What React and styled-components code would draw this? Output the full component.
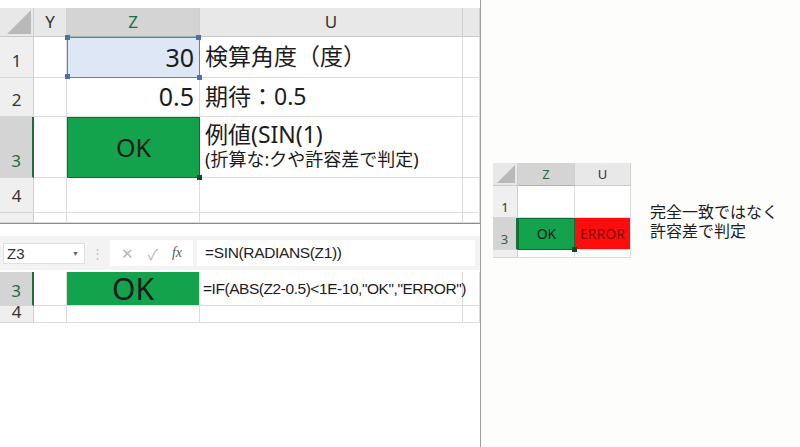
import React from 'react';
import styled, { createGlobalStyle, css } from 'styled-components';

const GlobalStyle = createGlobalStyle`
  html, body {
    margin: 0;
    padding: 0;
    background: #fdfdfb;
  }
  body {
    font-family: "Noto Sans", "Noto Sans CJK JP", sans-serif;
  }
`;

const Page = styled.div`
  display: flex;
  width: 800px;
  height: 447px;
  overflow: hidden;
`;

const LeftPane = styled.div`
  width: 480px;
  flex: none;
  display: flex;
  flex-direction: column;
  background: #fff;
  border-right: 1px solid #a0a0a0;
`;

const TopShot = styled.div`
  padding-top: 8px;
  border-bottom: 1px solid #8c8c8c;
`;

const Sheet = styled.div`
  display: grid;
  grid-template-columns: ${(p) => p.$cols};
  grid-template-rows: ${(p) => p.$rows};
`;

const Cell = styled.div`
  position: relative;
  box-sizing: border-box;
  display: flex;
  align-items: ${(p) => p.$valign || 'center'};
  justify-content: ${(p) => p.$align || 'flex-start'};
  padding: 0 ${(p) => (p.$pad === undefined ? 5 : p.$pad)}px;
  border-right: 1px solid #dcdcdc;
  border-bottom: 1px solid #dcdcdc;
  background: #fff;
  color: #1c1c1c;
  font-size: ${(p) => p.$size || 23}px;
  line-height: 1.1;
  white-space: nowrap;
  overflow: visible;
  z-index: 1;
`;

const FormulaText = styled(Cell)`
  font-family: "Liberation Sans", Arial, sans-serif;
  font-size: 15.5px;
  letter-spacing: -0.45px;
  padding: 0 3px;
  z-index: 3;
`;

const HeadCell = styled(Cell)`
  justify-content: center;
  padding: 0;
  background: ${(p) => (p.$active ? '#d4d4d4' : '#e8e8e8')};
  color: ${(p) => (p.$active ? '#1f6b3e' : '#333')};
  border-right: 1px solid #cfcfcf;
  border-bottom: 1px solid ${(p) => (p.$active ? '#9fb7a5' : '#c9c9c9')};
  font-size: ${(p) => p.$size || 17}px;
`;

const RowHead = styled(HeadCell)`
  align-items: flex-end;
  padding-bottom: ${(p) => (p.$pb === undefined ? 6 : p.$pb)}px;
  background: ${(p) => (p.$active ? '#d4d4d4' : '#efefef')};
  border-right: ${(p) => (p.$active ? '2px solid #1f6b3e' : '1px solid #cfcfcf')};
  border-bottom: 1px solid #d6d6d6;
  overflow: hidden;
`;

const Corner = styled.div`
  box-sizing: border-box;
  display: flex;
  align-items: flex-end;
  justify-content: flex-end;
  padding: 0 2px 2px 0;
  background: #e8e8e8;
  border-right: 1px solid #cfcfcf;
  border-bottom: 1px solid #c9c9c9;
`;

const Triangle = styled.div`
  width: 0;
  height: 0;
  border-left: ${(p) => p.$w}px solid transparent;
  border-bottom: ${(p) => p.$h}px solid #b9b9b9;
`;

const handle = css`
  content: '';
  position: absolute;
  width: 5px;
  height: 5px;
  background: ${(p) => p.$handle};
`;

const SelectedCell = styled(Cell)`
  background: ${(p) => p.$bg};
  border: 1px solid ${(p) => p.$edge};
  color: ${(p) => p.$ink || '#1c1c1c'};
  z-index: 2;
  &::after {
    ${handle}
    right: -3px;
    bottom: -3px;
  }
  ${(p) => p.$corners && css`
    &::before {
      ${handle}
      left: -3px;
      top: -3px;
      box-shadow: ${p.$cw}px 0 0 ${p.$handle}, 0 ${p.$ch}px 0 ${p.$handle};
    }
  `}
`;

const FillCell = styled(Cell)`
  background: ${(p) => p.$bg};
  color: ${(p) => p.$ink || '#1c1c1c'};
`;

const TwoLines = styled.div`
  display: flex;
  flex-direction: column;
  align-self: flex-start;
  padding-top: 5px;
`;

const SubLine = styled.span`
  font-size: 18px;
  margin-top: 3px;
`;

const FormulaArea = styled.div`
  margin-top: 12px;
`;

const FormulaBar = styled.div`
  display: flex;
  align-items: center;
  height: 34px;
  padding: 0 5px 0 3px;
  background: #f3f3f3;
  margin-bottom: 2px;
`;

const NameBox = styled.div`
  box-sizing: border-box;
  width: 82px;
  height: 21px;
  display: flex;
  align-items: center;
  justify-content: space-between;
  padding: 0 5px 0 3px;
  background: #fff;
  border: 1px solid #e0e0e0;
  color: #333;
  font-family: "Liberation Sans", Arial, sans-serif;
  font-size: 15px;
`;

const Caret = styled.span`
  font-size: 7px;
  color: #666;
`;

const Grip = styled.span`
  width: 25px;
  text-align: center;
  color: #c0c0c0;
  font-size: 13px;
`;

const FxBox = styled.div`
  box-sizing: border-box;
  width: 83px;
  height: 26px;
  display: flex;
  align-items: center;
  justify-content: space-around;
  padding: 0 4px;
  background: #fff;
  color: #b5b5b5;
  font-size: 15px;
`;

const FxLabel = styled.span`
  font-family: "Liberation Serif", "DejaVu Serif", serif;
  font-style: italic;
  color: #555;
  font-size: 14px;
`;

const FormulaInput = styled.div`
  flex: 1;
  height: 26px;
  margin-left: 4px;
  display: flex;
  align-items: center;
  padding-left: 8px;
  background: #fff;
  color: #222;
  font-family: "Liberation Sans", Arial, sans-serif;
  font-size: 15.5px;
  letter-spacing: -0.35px;
`;

const RightPane = styled.div`
  flex: 1;
  display: flex;
  align-items: flex-start;
  gap: 19px;
  padding: 163px 0 0 12px;
`;

const Note = styled.div`
  display: flex;
  flex-direction: column;
  gap: 1px;
  margin-top: 39px;
  color: #1c1c1c;
  font-family: "Noto Sans CJK JP", sans-serif;
`;

const NoteLine = styled.div`
  font-size: 16px;
  line-height: 18px;
`;

const bigCols = '34px 33px 133px 263px 17px';
const smallCols = '25px 57px 56px';

export default function App() {
  return (
    <>
      <GlobalStyle />
      <Page>
        <LeftPane>
          <TopShot>
            <Sheet $cols={bigCols} $rows="29px 41px 39px 61px 35px 10px">
              <Corner><Triangle $w={24} $h={24} /></Corner>
              <HeadCell>Y</HeadCell>
              <HeadCell $active>Z</HeadCell>
              <HeadCell>U</HeadCell>
              <HeadCell />

              <RowHead>1</RowHead>
              <Cell />
              <SelectedCell $bg="#dde7f5" $edge="#5a7fc6" $handle="#4a6fb8" $corners $cw={131} $ch={39} $align="flex-end" $size={25}>30</SelectedCell>
              <Cell>検算角度（度）</Cell>
              <Cell />

              <RowHead>2</RowHead>
              <Cell />
              <Cell $align="flex-end" $size={25}>0.5</Cell>
              <Cell>期待：0.5</Cell>
              <Cell />

              <RowHead $active>3</RowHead>
              <Cell />
              <SelectedCell $bg="#13a34c" $edge="#0d6d36" $handle="#0d4d28" $align="center" $size={25}>OK</SelectedCell>
              <Cell>
                <TwoLines>
                  <span>例値(SIN(1)</span>
                  <SubLine>(折算な:クや許容差で判定)</SubLine>
                </TwoLines>
              </Cell>
              <Cell />

              <RowHead>4</RowHead>
              <Cell />
              <Cell />
              <Cell />
              <Cell />

              <RowHead $pb={0} />
              <Cell />
              <Cell />
              <Cell />
              <Cell />
            </Sheet>
          </TopShot>

          <FormulaArea>
            <FormulaBar>
              <NameBox>
                Z3
                <Caret>▼</Caret>
              </NameBox>
              <Grip>⋮</Grip>
              <FxBox>
                <span>✕</span>
                <span>✓</span>
                <FxLabel>fx</FxLabel>
              </FxBox>
              <FormulaInput>=SIN(RADIANS(Z1))</FormulaInput>
            </FormulaBar>
            <Sheet $cols={bigCols} $rows="34px 17px">
              <RowHead $active $pb={4}>3</RowHead>
              <Cell />
              <FillCell $bg="#13a34c" $align="center" $size={30}>OK</FillCell>
              <FormulaText>=IF(ABS(Z2-0.5)&lt;1E-10,&quot;OK&quot;,&quot;ERROR&quot;)</FormulaText>
              <Cell />

              <RowHead $pb={0} $valign="flex-start">4</RowHead>
              <Cell />
              <Cell />
              <Cell />
              <Cell />
            </Sheet>
          </FormulaArea>
        </LeftPane>

        <RightPane>
          <Sheet $cols={smallCols} $rows="23px 32px 32px 8px">
            <Corner><Triangle $w={18} $h={18} /></Corner>
            <HeadCell $active $size={13}>Z</HeadCell>
            <HeadCell $size={13}>U</HeadCell>

            <RowHead $size={13} $pb={3}>1</RowHead>
            <Cell />
            <Cell />

            <RowHead $active $size={13} $pb={3}>3</RowHead>
            <SelectedCell $bg="#13a34c" $edge="#0d6d36" $handle="#0d4d28" $align="center" $size={14}>OK</SelectedCell>
            <FillCell $bg="#ff0d0d" $ink="#8a0a0a" $align="center" $size={14} $pad={0}>ERROR</FillCell>

            <RowHead $size={8} $pb={0} />
            <Cell />
            <Cell />
          </Sheet>
          <Note>
            <NoteLine>完全一致ではなく</NoteLine>
            <NoteLine>許容差で判定</NoteLine>
          </Note>
        </RightPane>
      </Page>
    </>
  );
}
